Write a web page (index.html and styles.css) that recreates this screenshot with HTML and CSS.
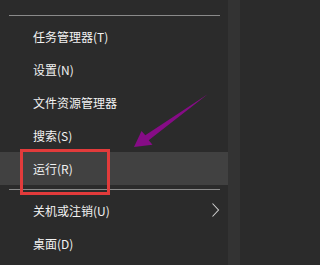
FILE: index.html
```html
<!DOCTYPE html>
<html lang="zh-CN">
<head>
<meta charset="utf-8">
<link rel="stylesheet" href="styles.css">
</head>
<body>
<div class="screen">
  <div class="menu">
    <div class="sep"></div>
    <div class="item">任务管理器(T)</div>
    <div class="item">设置(N)</div>
    <div class="item">文件资源管理器</div>
    <div class="item">搜索(S)</div>
    <div class="item active">运行(R)</div>
    <div class="sep"></div>
    <div class="item sub">关机或注销(U)
      <svg class="chev" width="8" height="14" viewBox="0 0 8 14"><polyline points="0.5,0.5 6.5,7 0.5,13.5" fill="none" stroke="#cfcfcf" stroke-width="1.1"/></svg>
    </div>
    <div class="item">桌面(D)</div>
  </div>
  <div class="strip"></div>
  <div class="redbox"></div>
  <svg class="arrow" width="240" height="265" viewBox="0 0 240 265">
    <polygon points="208,94 148.7,140.3 152.5,144.7 134,147 141.5,131 145.3,135.3" fill="#860c86"/>
  </svg>
</div>
</body>
</html>
```
FILE: styles.css
```css
html, body {
  margin: 0;
  padding: 0;
  background: #2b2b2b;
}
.screen {
  position: relative;
  display: flex;
  width: 240px;
  height: 265px;
  overflow: hidden;
  font-family: "Noto Sans CJK SC", "Noto Sans", sans-serif;
  font-size: 12px;
  color: #f2f2f2;
}
.menu {
  width: 228px;
  padding-top: 15px;
  background: #2b2b2b;
}
.strip {
  width: 12px;
  background: #333333;
}
.sep {
  height: 1px;
  margin: 0 8px 4px 9px;
  background: #8a8a8a;
}
.item {
  position: relative;
  height: 33px;
  line-height: 33px;
  padding-left: 33px;
  white-space: nowrap;
}
.item.active {
  background: #414141;
}
.active + .sep {
  margin-top: 4px;
}
.chev {
  position: absolute;
  left: 212px;
  top: 9px;
}
.redbox {
  position: absolute;
  left: 20px;
  top: 149px;
  width: 84px;
  height: 40px;
  border: 3px solid #e23b3b;
}
.arrow {
  position: absolute;
  left: 0;
  top: 0;
}
```
